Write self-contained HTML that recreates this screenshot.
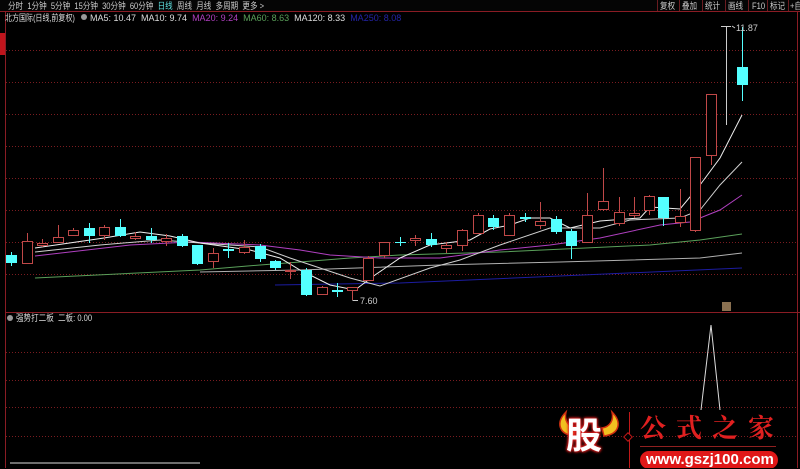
<!DOCTYPE html>
<html><head><meta charset="utf-8"><style>
*{margin:0;padding:0}
body{width:800px;height:468px;background:#000;overflow:hidden;position:relative;font-family:"Liberation Sans","Noto Sans CJK SC",sans-serif;}
.t{position:absolute;font-size:9px;white-space:nowrap;line-height:10px}
.s{transform:scaleX(0.84);transform-origin:0 0}
</style></head><body>
<svg width="800" height="468" style="position:absolute;left:0;top:0" xmlns="http://www.w3.org/2000/svg">
<rect x="0" y="0" width="800" height="11" fill="#050505"/>
<line x1="0" y1="11.5" x2="800" y2="11.5" stroke="#8a1c24" stroke-width="1"/>
<line x1="5.5" y1="11" x2="5.5" y2="468" stroke="#8a1c24"/>
<rect x="0" y="33" width="5" height="22" fill="#c0141c"/>
<line x1="797.5" y1="11" x2="797.5" y2="468" stroke="#8a1c24"/>
<line x1="5" y1="312.5" x2="800" y2="312.5" stroke="#8a1c24"/>
<g stroke="#7a1c20" stroke-dasharray="1,2" stroke-width="1">
<line x1="6" y1="50.5" x2="796" y2="50.5"/><line x1="6" y1="82.5" x2="796" y2="82.5"/>
<line x1="6" y1="114.5" x2="796" y2="114.5"/><line x1="6" y1="146.5" x2="796" y2="146.5"/>
<line x1="6" y1="178.5" x2="796" y2="178.5"/><line x1="6" y1="210.5" x2="796" y2="210.5"/>
<line x1="6" y1="242.5" x2="796" y2="242.5"/><line x1="6" y1="274.5" x2="796" y2="274.5"/>
<line x1="6" y1="352.5" x2="796" y2="352.5"/><line x1="6" y1="380.5" x2="796" y2="380.5"/>
<line x1="6" y1="407.5" x2="796" y2="407.5"/><line x1="6" y1="436.5" x2="796" y2="436.5"/>
</g>
<line x1="10" y1="463" x2="200" y2="463" stroke="#ddd"/>
<g stroke="#6a1c20"><line x1="657.5" y1="0" x2="657.5" y2="11"/><line x1="679.5" y1="0" x2="679.5" y2="11"/><line x1="702.5" y1="0" x2="702.5" y2="11"/><line x1="725.5" y1="0" x2="725.5" y2="11"/><line x1="748.5" y1="0" x2="748.5" y2="11"/><line x1="767.5" y1="0" x2="767.5" y2="11"/><line x1="788.5" y1="0" x2="788.5" y2="11"/></g>
<g fill="none" stroke-width="1">
<polyline stroke="#1c1ca0" points="275,285 400,283 560,276 742,268"/>
<polyline stroke="#b0b0b0" points="200,272 300,270 440,265 560,262 700,258 742,253"/>
<polyline stroke="#5aa05a" points="35,278 200,270 260,265 300,262 350,258 400,255 500,252 650,245 700,240 742,234"/>
<polyline stroke="#b040c0" points="35,256 130,245 190,242 260,245 300,250 330,255 380,258 440,258 500,250 550,245 600,238 660,225 690,222 720,210 742,195"/>
<polyline stroke="#d0d0d0" points="35,252 100,245 160,240 200,243 260,247 290,258 320,268 350,278 380,286 430,268 460,260 500,245 550,228 600,228 630,220 680,218 700,210 720,185 742,162"/>
<polyline stroke="#eee" points="35,248 104,238 140,232 170,236 200,243 250,250 280,258 300,270 330,285 355,290 375,275 400,258 430,245 470,240 490,229 510,225 530,218 550,218 570,228 600,221 640,218 650,207 680,209 700,185 720,158 742,115"/>
</g>
<g stroke="#c04848" stroke-width="1">
<line x1="27.5" y1="233" x2="27.5" y2="264"/><line x1="42.5" y1="239" x2="42.5" y2="247"/><line x1="58.5" y1="225" x2="58.5" y2="242"/><line x1="73.5" y1="228" x2="73.5" y2="236"/><line x1="104.5" y1="225" x2="104.5" y2="240"/><line x1="135.5" y1="232" x2="135.5" y2="240"/><line x1="166.5" y1="234" x2="166.5" y2="246"/><line x1="213.5" y1="248" x2="213.5" y2="268"/><line x1="244.5" y1="240" x2="244.5" y2="254"/><line x1="290.5" y1="262" x2="290.5" y2="279"/><line x1="322.5" y1="286" x2="322.5" y2="295"/><line x1="352.5" y1="287" x2="352.5" y2="300"/><line x1="368.5" y1="256" x2="368.5" y2="281"/><line x1="384.5" y1="242" x2="384.5" y2="258"/><line x1="415.5" y1="235" x2="415.5" y2="246"/><line x1="446.5" y1="242" x2="446.5" y2="253"/><line x1="462.5" y1="229" x2="462.5" y2="251"/><line x1="478.5" y1="213" x2="478.5" y2="234"/><line x1="509.5" y1="213" x2="509.5" y2="236"/><line x1="540.5" y1="202" x2="540.5" y2="229"/><line x1="587.5" y1="193" x2="587.5" y2="242"/><line x1="603.5" y1="168" x2="603.5" y2="211"/><line x1="619.5" y1="197" x2="619.5" y2="226"/><line x1="634.5" y1="197" x2="634.5" y2="218"/><line x1="649.5" y1="195" x2="649.5" y2="215"/><line x1="680.5" y1="189" x2="680.5" y2="227"/><line x1="695.5" y1="157" x2="695.5" y2="232"/><line x1="711.5" y1="94" x2="711.5" y2="165"/>
</g>
<g stroke="#54ffff" stroke-width="1">
<line x1="11.5" y1="252" x2="11.5" y2="266"/><line x1="89.5" y1="223" x2="89.5" y2="243"/><line x1="120.5" y1="219" x2="120.5" y2="237"/><line x1="151.5" y1="228" x2="151.5" y2="243"/><line x1="182.5" y1="234" x2="182.5" y2="247"/><line x1="197.5" y1="245" x2="197.5" y2="265"/><line x1="228.5" y1="243" x2="228.5" y2="258"/><line x1="260.5" y1="244" x2="260.5" y2="262"/><line x1="275.5" y1="260" x2="275.5" y2="270"/><line x1="306.5" y1="268" x2="306.5" y2="296"/><line x1="337.5" y1="283" x2="337.5" y2="297"/><line x1="400.5" y1="237" x2="400.5" y2="246"/><line x1="431.5" y1="233" x2="431.5" y2="247"/><line x1="493.5" y1="215" x2="493.5" y2="230"/><line x1="525.5" y1="213" x2="525.5" y2="222"/><line x1="556.5" y1="216" x2="556.5" y2="234"/><line x1="571.5" y1="229" x2="571.5" y2="259"/><line x1="663.5" y1="197" x2="663.5" y2="226"/><line x1="742.5" y1="27" x2="742.5" y2="101"/>
</g>
<g fill="#000" stroke="#c04848" stroke-width="1">
<rect x="22.5" y="241.5" width="10" height="22"/><rect x="37.5" y="243.5" width="10" height="2"/><rect x="53.5" y="237.5" width="10" height="5"/><rect x="68.5" y="230.5" width="10" height="5"/><rect x="99.5" y="227.5" width="10" height="8"/><rect x="130.5" y="236.5" width="10" height="2"/><rect x="161.5" y="238.5" width="10" height="3"/><rect x="208.5" y="253.5" width="10" height="8"/><rect x="239.5" y="247.5" width="10" height="5"/><rect x="285.5" y="270.5" width="10" height="1"/><rect x="317.5" y="287.5" width="10" height="7"/><rect x="347.5" y="287.5" width="10" height="3"/><rect x="363.5" y="258.5" width="10" height="22"/><rect x="379.5" y="242.5" width="10" height="13"/><rect x="410.5" y="238.5" width="10" height="2"/><rect x="441.5" y="245.5" width="10" height="3"/><rect x="457.5" y="230.5" width="10" height="15"/><rect x="473.5" y="215.5" width="10" height="18"/><rect x="504.5" y="215.5" width="10" height="20"/><rect x="535.5" y="221.5" width="10" height="4"/><rect x="582.5" y="215.5" width="10" height="27"/><rect x="598.5" y="201.5" width="10" height="8"/><rect x="614.5" y="212.5" width="10" height="11"/><rect x="629.5" y="213.5" width="10" height="2"/><rect x="644.5" y="196.5" width="10" height="14"/><rect x="675.5" y="216.5" width="10" height="6"/><rect x="690.5" y="157.5" width="10" height="73"/><rect x="706.5" y="94.5" width="10" height="61"/>
</g>
<g fill="#54ffff">
<rect x="6" y="255" width="11" height="8"/><rect x="84" y="228" width="11" height="8"/><rect x="115" y="227" width="11" height="9"/><rect x="146" y="236" width="11" height="4"/><rect x="177" y="236" width="11" height="10"/><rect x="192" y="245" width="11" height="19"/><rect x="223" y="249" width="11" height="2"/><rect x="255" y="246" width="11" height="13"/><rect x="270" y="261" width="11" height="7"/><rect x="301" y="270" width="11" height="25"/><rect x="332" y="290" width="11" height="2"/><rect x="395" y="242" width="11" height="1"/><rect x="426" y="239" width="11" height="6"/><rect x="488" y="218" width="11" height="9"/><rect x="520" y="217" width="11" height="2"/><rect x="551" y="219" width="11" height="13"/><rect x="566" y="231" width="11" height="15"/><rect x="658" y="197" width="11" height="21"/><rect x="737" y="67" width="11" height="18"/>
</g>
<line x1="726.5" y1="26" x2="726.5" y2="125" stroke="#ccc"/>
<line x1="721" y1="26.5" x2="731" y2="26.5" stroke="#ccc"/>
<line x1="732" y1="26" x2="735" y2="28" stroke="#ccc"/>
<line x1="352.5" y1="300.5" x2="358" y2="300.5" stroke="#ccc"/>
<rect x="722" y="302" width="9" height="9" fill="#8a7050"/>
<polyline fill="none" stroke="#ddd" points="701,410 711,325 720,410"/>
<circle cx="10" cy="318" r="3" fill="#999"/>
<circle cx="84" cy="17" r="3" fill="#999"/>
<path d="M566,412 C556,422 558,434 574,436 L576,428 C568,427 564,420 566,412Z" fill="#f0c020" stroke="#d03010" stroke-width="1.5"/>
<path d="M612,412 C622,422 620,434 604,436 L602,428 C610,427 614,420 612,412Z" fill="#f0c020" stroke="#d03010" stroke-width="1.5"/>
<line x1="629.5" y1="412" x2="629.5" y2="468" stroke="#c01818"/>
<rect x="625" y="434" width="6" height="6" transform="rotate(45 628 437)" fill="#000" stroke="#c01818"/>
<line x1="640" y1="446.5" x2="776" y2="446.5" stroke="#902020"/>
<rect x="640" y="451" width="138" height="18" rx="9" fill="#e01818"/>
</svg>
<div class="t s" style="left:8px;top:1px;color:#ccc">分时&nbsp;&nbsp;1分钟&nbsp;&nbsp;5分钟&nbsp;&nbsp;15分钟&nbsp;&nbsp;30分钟&nbsp;&nbsp;60分钟&nbsp;&nbsp;<span style="color:#5fe0e0">日线</span>&nbsp;&nbsp;周线&nbsp;&nbsp;月线&nbsp;&nbsp;多周期&nbsp;&nbsp;更多 &gt;</div>
<div class="t s" style="left:5px;top:13px;color:#ddd;transform:scaleX(0.78)">北方国际(日线,前复权)</div>
<div class="t" style="left:90px;top:13px;color:#ddd">MA5: 10.47&nbsp; MA10: 9.74&nbsp; <span style="color:#b040c0">MA20: 9.24</span>&nbsp; <span style="color:#5aa05a">MA60: 8.63</span>&nbsp; MA120: 8.33&nbsp; <span style="color:#2424a8">MA250: 8.08</span></div>
<div class="t s" style="left:660px;top:1px;color:#ccc">复权</div>
<div class="t s" style="left:682px;top:1px;color:#ccc">叠加</div>
<div class="t s" style="left:705px;top:1px;color:#ccc">统计</div>
<div class="t s" style="left:728px;top:1px;color:#ccc">画线</div>
<div class="t s" style="left:752px;top:1px;color:#ccc">F10</div>
<div class="t s" style="left:770px;top:1px;color:#ccc">标记</div>
<div class="t s" style="left:790px;top:1px;color:#ccc">+自</div>
<div class="t" style="left:736px;top:23px;color:#ccc">11.87</div>
<div class="t" style="left:360px;top:296px;color:#ccc">7.60</div>
<div class="t s" style="left:16px;top:313px;color:#ddd">强势打二板&nbsp; 二板: 0.00</div>
<div class="t" style="left:566px;top:414px;font-size:36px;line-height:44px;font-weight:bold;color:#fff;text-shadow:0 0 3px #e02020,0 0 3px #e02020,0 0 2px #e02020">股</div>
<div class="t" style="left:640px;top:412px;font-size:26px;line-height:30px;color:#e02020;letter-spacing:10px;font-family:'Noto Serif CJK SC',serif;font-weight:bold">公式之家</div>
<div class="t" style="left:646px;top:451px;font-size:15px;line-height:18px;color:#fff;font-weight:bold">www.gszj100.com</div>
</body></html>
